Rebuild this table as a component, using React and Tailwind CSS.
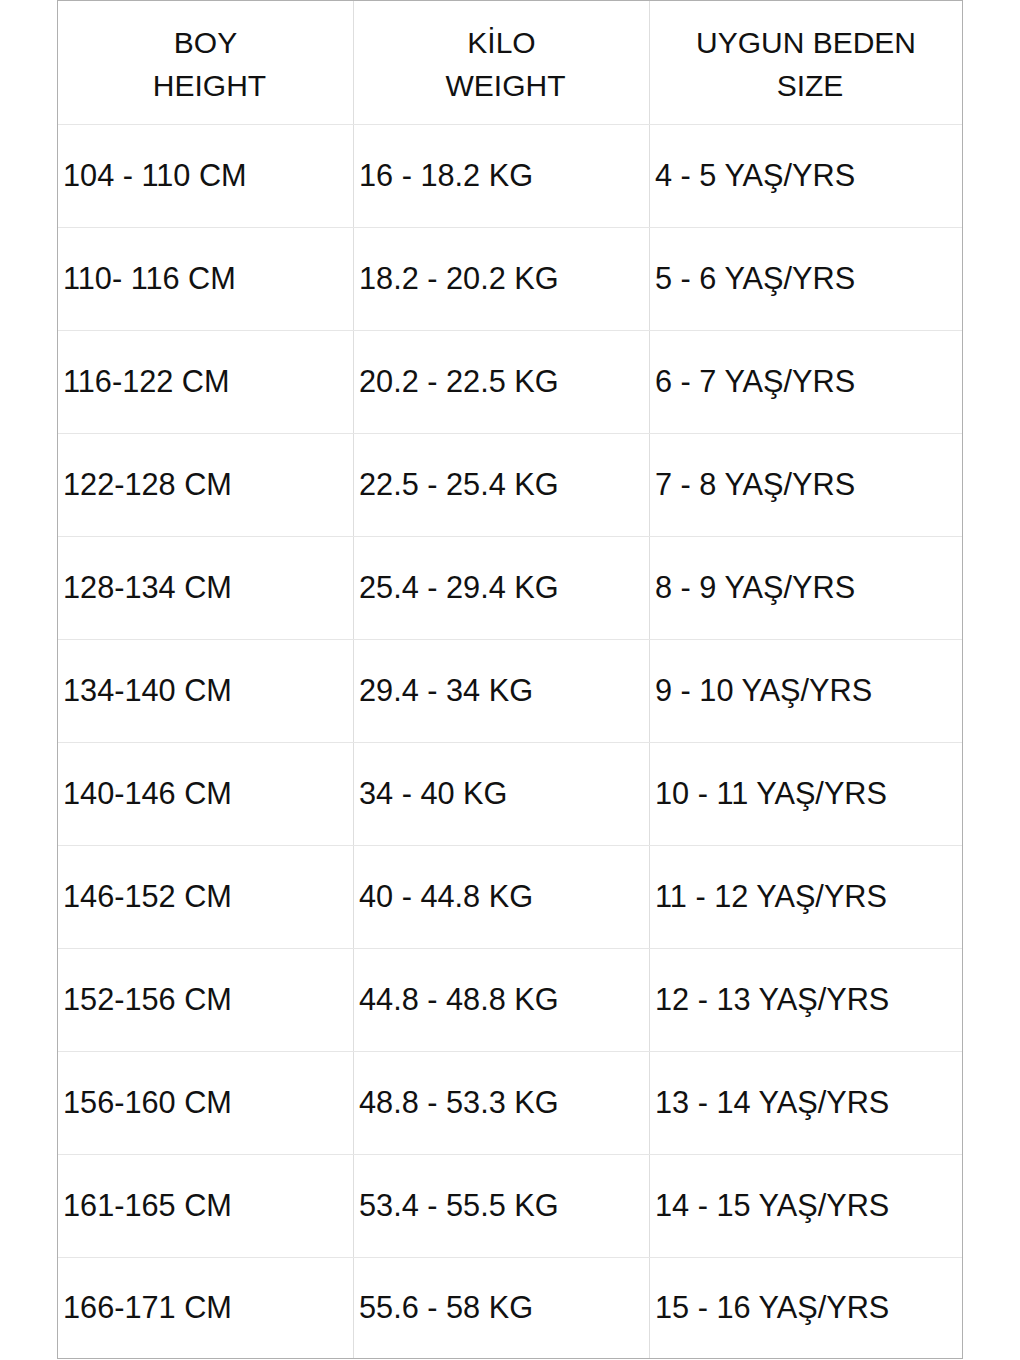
import React from "react";

const rows = [
  ["104 - 110 CM", "16 - 18.2 KG", "4 - 5 YAŞ/YRS"],
  ["110- 116 CM", "18.2 - 20.2 KG", "5 - 6 YAŞ/YRS"],
  ["116-122 CM", "20.2 - 22.5 KG", "6 - 7 YAŞ/YRS"],
  ["122-128 CM", "22.5 - 25.4 KG", "7 - 8 YAŞ/YRS"],
  ["128-134 CM", "25.4 - 29.4 KG", "8 - 9 YAŞ/YRS"],
  ["134-140 CM", "29.4 - 34 KG", "9 - 10 YAŞ/YRS"],
  ["140-146 CM", "34 - 40 KG", "10 - 11 YAŞ/YRS"],
  ["146-152 CM", "40 - 44.8 KG", "11 - 12 YAŞ/YRS"],
  ["152-156 CM", "44.8 - 48.8 KG", "12 - 13 YAŞ/YRS"],
  ["156-160 CM", "48.8 - 53.3 KG", "13 - 14 YAŞ/YRS"],
  ["161-165 CM", "53.4 - 55.5 KG", "14 - 15 YAŞ/YRS"],
  ["166-171 CM", "55.6 - 58 KG", "15 - 16 YAŞ/YRS"],
];

const headers = [
  ["BOY", "HEIGHT"],
  ["KİLO", "WEIGHT"],
  ["UYGUN BEDEN", "SIZE"],
];

export default function App() {
  return (
    <div className="bg-white w-[1020px] h-[1360px] font-['Liberation_Sans',Arial,sans-serif] text-[#111]">
      <div className="ml-[57px] w-[906px] border border-[#b0b0b0]">
        {/* header */}
        <div className="grid grid-cols-[296px_296px_312px] h-[124px] border-b border-[#e6e6e6]">
          {headers.map((h, i) => (
            <div
              key={i}
              className={`flex flex-col items-center justify-center pt-[2px] text-[30px] leading-[43px] ${
                i < 2 ? "border-r border-[#dedede]" : ""
              }`}
            >
              <span>{h[0]}</span>
              <span className="pl-[8px]">{h[1]}</span>
            </div>
          ))}
        </div>

        {rows.map((row, r) => (
          <div
            key={r}
            className={`grid grid-cols-[296px_296px_312px] ${
              r < rows.length - 1 ? "h-[103px] border-b border-[#e6e6e6]" : "h-[100px]"
            }`}
          >
            {row.map((cell, c) => (
              <div
                key={c}
                className={`flex items-center pl-[5px] pt-[1px] text-[30.7px] ${
                  c < 2 ? "border-r border-[#dedede]" : ""
                }`}
              >
                {cell}
              </div>
            ))}
          </div>
        ))}
      </div>
    </div>
  );
}
